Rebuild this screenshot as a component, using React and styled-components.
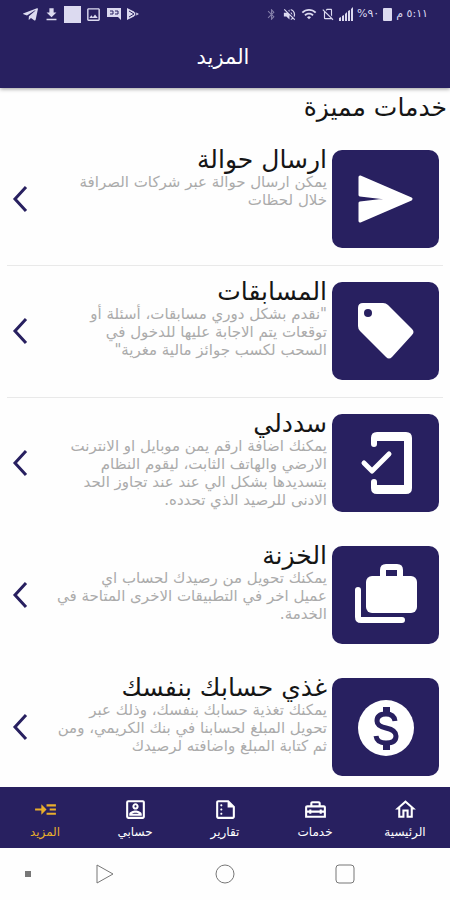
import React from "react";
import styled, { createGlobalStyle, ThemeProvider } from "styled-components";
import { FaTelegramPlane } from "react-icons/fa";
import {
  MdBluetooth,
  MdDownload,
  MdOutlineHome,
  MdOutlineHomeRepairService,
  MdOutlineImage,
  MdOutlinePortrait,
  MdOutlineSignalCellularNoSim,
  MdOutlineSummarize,
  MdReadMore,
  MdVolumeOff,
  MdWifi,
} from "react-icons/md";

const theme = {
  primary: "#282060",
  accent: "#e9ae2c",
  status: "#dcdaf0",
  text: "#151515",
  muted: "#ababab",
  line: "#e9e9e9",
  body: "#fefefe",
};

const GlobalStyle = createGlobalStyle`
  *, *::before, *::after {
    box-sizing: border-box;
  }

  body {
    margin: 0;
    background: ${theme.body};
    font-family: "DejaVu Sans", sans-serif;
  }

  h1, h2, h3, p, ul {
    margin: 0;
    padding: 0;
    font-weight: 400;
  }
`;

const Page = styled.div`
  display: flex;
  flex-direction: column;
  height: 100vh;
  color: ${(props) => props.theme.text};
`;

const Top = styled.header`
  flex: none;
  z-index: 1;
  background: ${(props) => props.theme.primary};
  box-shadow: 0 1px 4px rgba(0, 0, 0, 0.4);
`;

const StatusBar = styled.div`
  display: flex;
  justify-content: space-between;
  height: 28px;
  padding: 0 22px;
  color: ${(props) => props.theme.status};
`;

const StatusGroup = styled.div`
  display: flex;
  align-items: center;
  gap: 4px;
  font-size: 11px;
  line-height: 28px;
  white-space: nowrap;
`;

const Square = styled.span`
  width: 17px;
  height: 17px;
  background: currentColor;
`;

const Battery = styled.span`
  width: 9px;
  height: 13px;
  border-radius: 1px;
  background: currentColor;
`;

const Title = styled.h1`
  height: 60px;
  padding-right: 4px;
  color: #fff;
  font-size: 21px;
  line-height: 58px;
  text-align: center;
`;

const Main = styled.main`
  flex: 1 1 0;
  overflow-y: auto;
  scrollbar-width: none;
`;

const Heading = styled.h2`
  height: 46px;
  padding: 0 3px;
  font-size: 25px;
  line-height: 40px;
`;

const List = styled.ul`
  list-style: none;
  padding: 0 7px;
`;

const Row = styled.a`
  display: flex;
  align-items: flex-start;
  height: 132px;
  padding-right: 4px;
  border-bottom: 1px solid
    ${(props) => (props.$divided ? props.theme.line : "transparent")};
  color: inherit;
  text-decoration: none;
`;

const Tile = styled.span`
  flex: none;
  display: flex;
  align-items: center;
  justify-content: center;
  width: 107px;
  height: 98px;
  margin-top: 16px;
  border-radius: 10px;
  background: ${(props) => props.theme.primary};
  color: #fff;
`;

const Info = styled.div`
  flex: 1;
  padding: 12px 5px 0 0;
`;

const Name = styled.h3`
  font-size: 25px;
  line-height: 27px;
  white-space: nowrap;
`;

const Description = styled.p`
  color: ${(props) => props.theme.muted};
  font-size: 15px;
  line-height: 18px;
`;

const Line = styled.span`
  display: block;
  white-space: nowrap;
`;

const Chevron = styled.svg`
  flex: none;
  align-self: center;
  margin: 0 0 2px 4px;
`;

const TabBar = styled.nav`
  flex: none;
  display: grid;
  grid-template-columns: repeat(5, 1fr);
  height: 61px;
  background: ${(props) => props.theme.primary};
`;

const Tab = styled.a`
  display: flex;
  flex-direction: column;
  align-items: center;
  padding-top: 10px;
  color: ${(props) => (props.$active ? props.theme.accent : "#fff")};
  font-size: 12px;
  line-height: 20px;
  text-decoration: none;
  white-space: nowrap;
`;

const SystemBar = styled.div`
  flex: none;
  display: grid;
  grid-template-columns: 45fr 120fr 120fr 120fr 45fr;
  height: 52px;
`;

const SystemButton = styled.button`
  display: flex;
  align-items: center;
  justify-content: center;
  padding: 0;
  border: 0;
  background: none;
  color: #777;

  &:first-child {
    padding-left: 10px;
  }
`;

const MessageIcon = () => (
  <svg width="16" height="14" viewBox="0 0 16 14" aria-hidden="true">
    <path d="M1 1h14v12l-3-3H1z" fill="currentColor" />
    <path d="M4 4h3v3H4M9 4h3v3H9" fill="none" stroke="#282060" />
  </svg>
);

const PlayStoreIcon = () => (
  <svg width="14" height="14" viewBox="0 0 14 14" aria-hidden="true">
    <path d="M1 1l12 6-12 6z" fill="currentColor" />
    <path d="M3 4l5 3-5 3M8 3l2 4-2 4" fill="none" stroke="#282060" />
  </svg>
);

const SignalIcon = () => (
  <svg width="14" height="14" viewBox="0 0 14 14" aria-hidden="true">
    <path
      d="M0 14v-3l2-1v4zM3 14V9l2-1v6zM6 14V7l2-2v9zM9 14V4l2-1v11zM12 14V2l2-2v14z"
      fill="currentColor"
    />
  </svg>
);

const TileIcon = ({ children }) => (
  <svg width="68" height="68" viewBox="0 0 68 68" aria-hidden="true" fill="currentColor" strokeLinejoin="round">
    {children}
  </svg>
);

const SendIcon = () => (
  <TileIcon>
    <path d="M8 12L59 34L8 56V38L42 34L8 30Z" stroke="currentColor" strokeWidth="3" />
  </TileIcon>
);

const TagIcon = () => (
  <TileIcon>
    <path d="M11 6H31Q34 6 36 8L60 32Q63 35 60 38L40 60Q37 63 34 60L8 34Q6 32 6 29V11Q6 6 11 6Z" />
    <circle cx="16" cy="16" r="4" fill="#282060" />
  </TileIcon>
);

const MobileCheckIcon = () => (
  <TileIcon>
    <path
      fillRule="evenodd"
      d="M19 15V9Q19 3 25 3H54Q60 3 60 9V59Q60 65 54 65H25Q19 65 19 59V53Q19 50 22 50Q25 50 25 53V56H52V12H25V15Q25 18 22 18Q19 18 19 15Z"
    />
    <path d="M12 34L20 42L37 25" fill="none" stroke="currentColor" strokeWidth="5" strokeLinecap="round" />
  </TileIcon>
);

const SafeIcon = () => (
  <TileIcon>
    <path d="M6 29V56Q6 59 9 59H50" fill="none" stroke="currentColor" strokeWidth="6" strokeLinecap="round" />
    <rect x="14" y="15" width="51" height="37" rx="6" />
    <path d="M31 18V9Q31 6 34 6H45Q48 6 48 9V18" fill="none" stroke="currentColor" strokeWidth="6" />
    <path d="M34 10H45V15H34Z" fill="#282060" />
  </TileIcon>
);

const MoneyIcon = () => (
  <TileIcon>
    <circle cx="34" cy="35" r="28" />
    <path
      d="M43 28Q42 21 34 21Q25 21 25 28Q25 33 34 35Q44 37 44 43Q44 50 34 50Q25 50 24 43"
      fill="none"
      stroke="#282060"
      strokeWidth="5"
    />
    <path d="M31 14H38V21H31ZM31 50H38V57H31Z" fill="#282060" />
  </TileIcon>
);

const services = [
  {
    name: "ارسال حوالة",
    icon: <SendIcon />,
    lines: ["يمكن ارسال حوالة عبر شركات الصرافة", "خلال لحظات"],
    divided: true,
  },
  {
    name: "المسابقات",
    icon: <TagIcon />,
    lines: [
      '"نقدم بشكل دوري مسابقات، أسئلة أو',
      "توقعات يتم الاجابة عليها للدخول في",
      'السحب لكسب جوائز مالية مغرية"',
    ],
    divided: true,
  },
  {
    name: "سددلي",
    icon: <MobileCheckIcon />,
    lines: [
      "يمكنك اضافة ارقم يمن موبايل او الانترنت",
      "الارضي والهاتف الثابت، ليقوم النظام",
      "بتسديدها بشكل الي عند عند تجاوز الحد",
      "الادنى للرصيد الذي تحدده.",
    ],
  },
  {
    name: "الخزنة",
    icon: <SafeIcon />,
    lines: [
      "يمكنك تحويل من رصيدك لحساب اي",
      "عميل اخر في التطبيقات الاخرى المتاحة في",
      "الخدمة.",
    ],
  },
  {
    name: "غذي حسابك بنفسك",
    icon: <MoneyIcon />,
    lines: [
      "يمكنك تغذية حسابك بنفسك، وذلك عبر",
      "تحويل المبلغ لحسابنا في بنك الكريمي، ومن",
      "ثم كتابة المبلغ واضافته لرصيدك",
    ],
  },
];

const tabs = [
  { label: "الرئيسية", icon: MdOutlineHome },
  { label: "خدمات", icon: MdOutlineHomeRepairService },
  { label: "تقارير", icon: MdOutlineSummarize },
  { label: "حسابي", icon: MdOutlinePortrait },
  { label: "المزيد", icon: MdReadMore, active: true },
];

const Service = ({ service }) => (
  <li>
    <Row href="#" $divided={service.divided}>
      <Tile>{service.icon}</Tile>
      <Info>
        <Name>{service.name}</Name>
        <Description>
          {service.lines.map((line) => (
            <Line key={line}>{line}</Line>
          ))}
        </Description>
      </Info>
      <Chevron width="18" height="28" viewBox="0 0 18 28" aria-hidden="true">
        <path d="M15 2L4 14l11 12" fill="none" stroke="#282060" strokeWidth="3" />
      </Chevron>
    </Row>
  </li>
);

const App = () => {
  return (
    <ThemeProvider theme={theme}>
      <GlobalStyle />
      <Page dir="rtl" lang="ar">
        <Top>
          <StatusBar dir="ltr">
            <StatusGroup>
              <FaTelegramPlane size={17} />
              <MdDownload size={17} />
              <Square />
              <MdOutlineImage size={17} />
              <MessageIcon />
              <PlayStoreIcon />
            </StatusGroup>
            <StatusGroup>
              <MdBluetooth size={13} opacity={0.5} />
              <MdVolumeOff size={15} />
              <MdWifi size={16} />
              <MdOutlineSignalCellularNoSim size={14} />
              <SignalIcon />
              <span>%٩٠</span>
              <Battery />
              <span dir="rtl">٥:١١ م</span>
            </StatusGroup>
          </StatusBar>
          <Title>المزيد</Title>
        </Top>
        <Main>
          <Heading>خدمات مميزة</Heading>
          <List>
            {services.map((service) => (
              <Service key={service.name} service={service} />
            ))}
          </List>
        </Main>
        <TabBar>
          {tabs.map(({ label, icon: Icon, active }) => (
            <Tab key={label} href="#" $active={active}>
              <Icon size={25} />
              {label}
            </Tab>
          ))}
        </TabBar>
        <SystemBar dir="ltr">
          <SystemButton aria-label="لوحة المفاتيح">
            <svg width="6" height="6" viewBox="0 0 6 6">
              <path d="M0 0h6v6H0z" fill="currentColor" />
            </svg>
          </SystemButton>
          <SystemButton aria-label="رجوع">
            <svg width="20" height="20" viewBox="0 0 20 20" fill="none" stroke="currentColor" strokeLinejoin="round">
              <path d="M2 1v18l16-9z" />
            </svg>
          </SystemButton>
          <SystemButton aria-label="الشاشة الرئيسية">
            <svg width="20" height="20" viewBox="0 0 20 20" fill="none" stroke="currentColor">
              <circle cx="10" cy="10" r="9" />
            </svg>
          </SystemButton>
          <SystemButton aria-label="التطبيقات الأخيرة">
            <svg width="20" height="20" viewBox="0 0 20 20" fill="none" stroke="currentColor">
              <rect x="1" y="1" width="18" height="18" rx="3" />
            </svg>
          </SystemButton>
        </SystemBar>
      </Page>
    </ThemeProvider>
  );
};

export default App;
